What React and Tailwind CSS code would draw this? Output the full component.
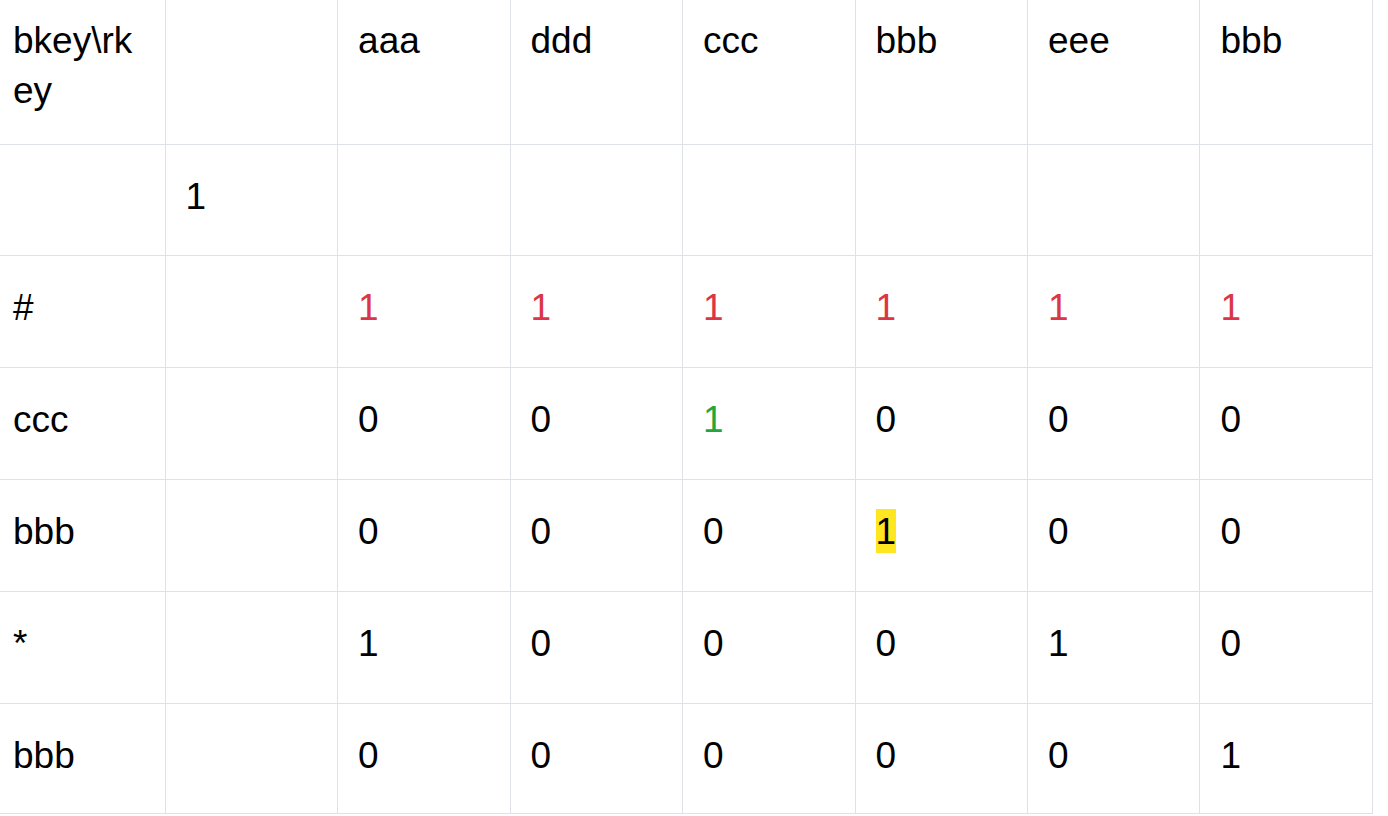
import React from 'react';

const header = ['bkey\\rkey', '', 'aaa', 'ddd', 'ccc', 'bbb', 'eee', 'bbb'];

const rows = [
  { h: 'h-[111px]', cells: ['', '1', '', '', '', '', '', ''] },
  { h: 'h-[112px]', cells: ['#', '', 'r1', 'r1', 'r1', 'r1', 'r1', 'r1'] },
  { h: 'h-[112px]', cells: ['ccc', '', '0', '0', 'g1', '0', '0', '0'] },
  { h: 'h-[112px]', cells: ['bbb', '', '0', '0', '0', 'y1', '0', '0'] },
  { h: 'h-[112px]', cells: ['*', '', '1', '0', '0', '0', '1', '0'] },
  { h: 'h-[110px]', cells: ['bbb', '', '0', '0', '0', '0', '0', '1'] },
];

const Value = ({ v }) => {
  if (v.startsWith('r')) return <span className="text-[#dc3545]">{v.slice(1)}</span>;
  if (v.startsWith('g')) return <span className="text-[#22a63f]">{v.slice(1)}</span>;
  if (v.startsWith('y')) return <span className="bg-[#ffe620] py-[1.5px]">{v.slice(1)}</span>;
  return <span>{v}</span>;
};

const cellCls = (i) =>
  `border-r border-b border-[#dee2e6] align-top ${i === 0 ? 'w-[165px] pl-[13px] pr-[12px]' : 'w-[172.4px] px-[20px]'}`;

export default function App() {
  return (
    <div className="w-[1388px] h-[816px] bg-white overflow-hidden font-['Liberation_Sans',Arial,sans-serif] text-[37px] leading-[50px] text-black">
      <table className="border-collapse table-fixed w-[1373px]">
        <thead>
          <tr className="h-[144px]">
            {header.map((t, i) => (
              <th key={i} className={`${cellCls(i)} font-normal text-left pt-[16px] break-all`}>
                {t}
              </th>
            ))}
          </tr>
        </thead>
        <tbody>
          {rows.map((row, r) => (
            <tr key={r} className={row.h}>
              {row.cells.map((v, i) => (
                <td key={i} className={`${cellCls(i)} pt-[27px]`}>
                  <Value v={v} />
                </td>
              ))}
            </tr>
          ))}
        </tbody>
      </table>
    </div>
  );
}
